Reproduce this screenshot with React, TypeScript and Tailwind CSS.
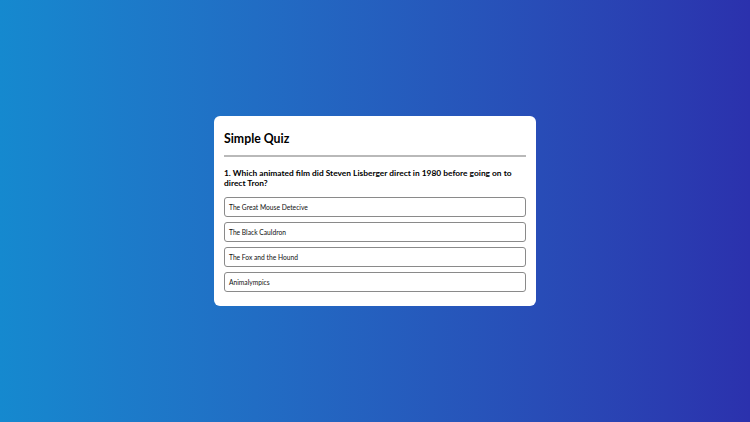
import React from 'react';

const answers = [
  'The Great Mouse Detecive',
  'The Black Cauldron',
  'The Fox and the Hound',
  'Animalympics',
];

export default function App() {
  return (
    <div
      className="w-full h-[422px] flex items-center justify-center bg-gradient-to-r from-[#1589cf] to-[#2b31ad]"
      style={{ fontFamily: 'Lato, "Open Sans", sans-serif' }}
    >
      <div className="w-[322px] bg-white rounded-[6px] px-[10px] pt-[14px] pb-[14px]">
        <h1 className="text-[12.3px] leading-[18px] font-bold text-black">Simple Quiz</h1>
        <hr className="mt-[7px] border-0 h-[2px] bg-[#b9b9b9]" />
        <p className="mt-[11px] text-[8.4px] leading-[10px] font-bold text-black">
          1. Which animated film did Steven Lisberger direct in 1980 before going on to direct Tron?
        </p>
        <div className="mt-[9px] flex flex-col gap-[5px]">
          {answers.map((a) => (
            <button
              key={a}
              className="h-[20px] w-full text-left pl-[4px] border border-[#8a8a8a] rounded-[3px] bg-white text-[6.7px] text-[#111]"
            >
              {a}
            </button>
          ))}
        </div>
      </div>
    </div>
  );
}
